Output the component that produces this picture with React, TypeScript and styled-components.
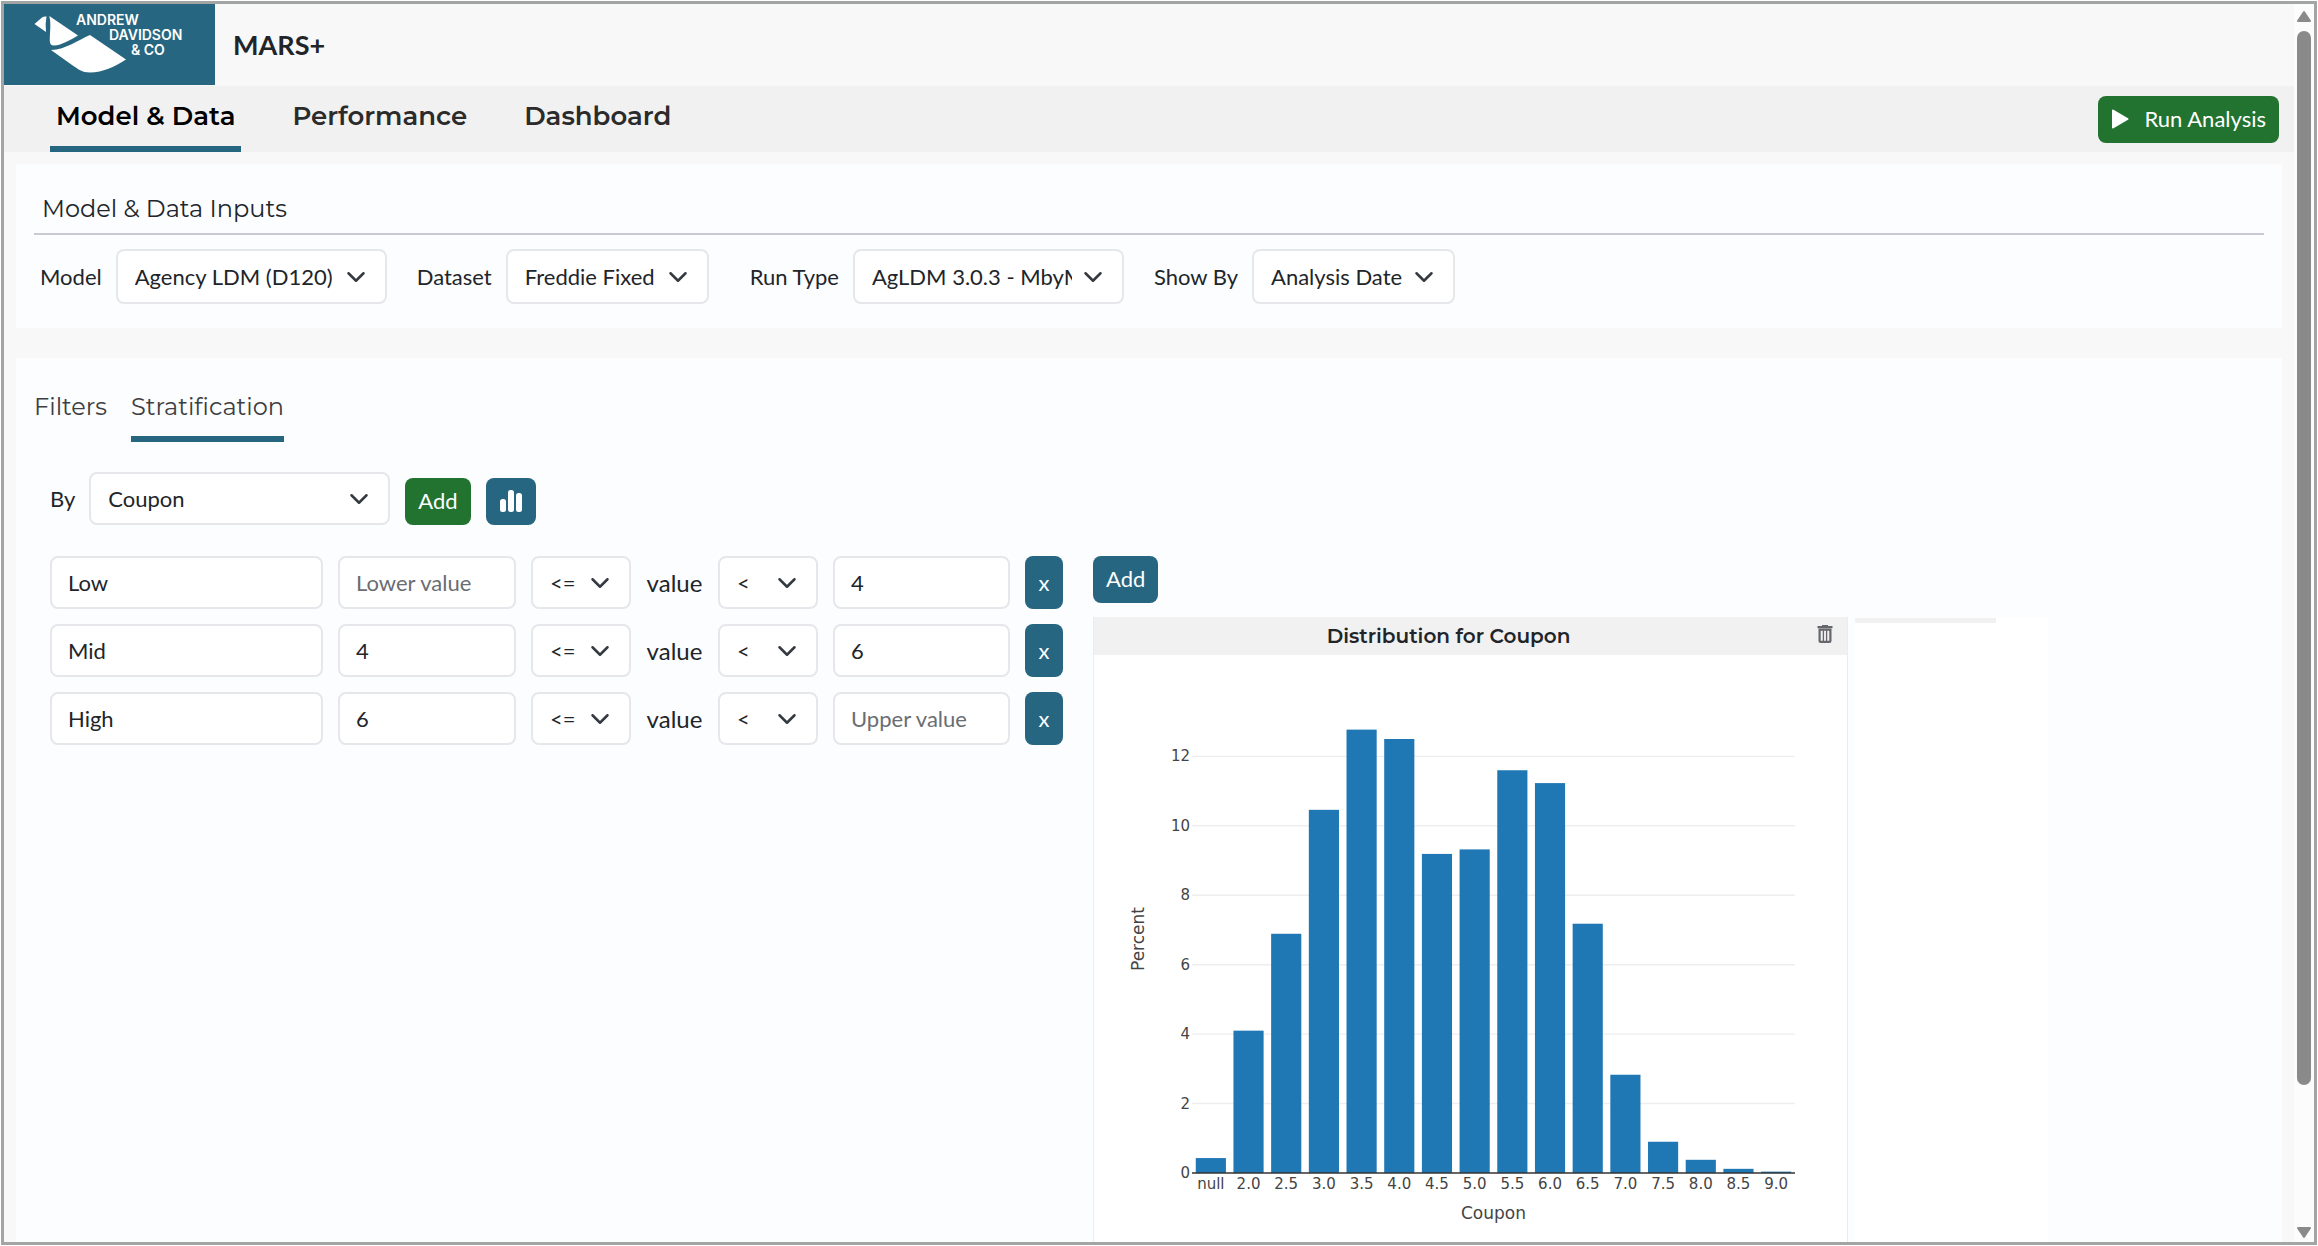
import React from "react";
import styled, { createGlobalStyle } from "styled-components";

const TEAL = "#266680";
const GREEN = "#22732f";
const BODY_FONT = `Lato, "Liberation Sans", sans-serif`;
const HEAD_FONT = `Montserrat, Inter, sans-serif`;
const PLOT_FONT = `"DejaVu Sans", Verdana, sans-serif`;

const GlobalStyle = createGlobalStyle`
  *, *::before, *::after { box-sizing: border-box; }
  body {
    margin: 0;
    background: #fff;
    color: #212529;
    font-family: ${BODY_FONT};
    font-size: 22px;
    line-height: 32px;
  }
  button, input, select { font: inherit; color: inherit; margin: 0; }
`;

const Frame = styled.div`
  display: flex;
  min-height: calc(100vh - 2px);
  margin: 1px;
  border: 3px solid #a3a5a4;
`;

const Page = styled.div`
  flex: 1;
  min-width: 0;
  display: flex;
  flex-direction: column;
  background: #f8f8f8;
`;

const Header = styled.header`
  display: flex;
  align-items: flex-start;
  height: 82px;
`;

const LogoBox = styled.a`
  display: block;
  width: 211px;
  height: 81px;
  background: ${TEAL};
`;

const LogoText = styled.text`
  font-family: Inter, sans-serif;
  font-size: 14px;
  font-weight: 600;
  fill: #fff;
`;

const AppName = styled.h1`
  margin: 0 0 0 18px;
  font-size: 27px;
  font-weight: 700;
  line-height: 82px;
`;

const NavBar = styled.nav`
  display: flex;
  justify-content: space-between;
  align-items: stretch;
  height: 66px;
  padding: 0 15px 0 46px;
  background: #f1f1f1;
`;

const NavTabs = styled.div`
  display: flex;
  gap: 45px;
`;

const NavTab = styled.a<{ $active?: boolean }>`
  display: flex;
  align-items: center;
  padding: 0 6px;
  border-bottom: 6px solid ${(p) => (p.$active ? TEAL : "transparent")};
  color: ${(p) => (p.$active ? "#000" : "#2b2b2b")};
  font-family: ${HEAD_FONT};
  font-size: 26px;
  font-weight: 600;
  text-decoration: none;
`;

const Button = styled.button<{ $tone: "green" | "teal"; $narrow?: boolean }>`
  display: inline-flex;
  align-items: center;
  justify-content: center;
  gap: 16px;
  height: ${(p) => (p.$narrow ? 53 : 47)}px;
  width: ${(p) => (p.$narrow ? "38px" : "auto")};
  padding: ${(p) => (p.$narrow ? "0" : "0 13px 1px")};
  border: 0;
  border-radius: 8px;
  background: ${(p) => (p.$tone === "green" ? GREEN : TEAL)};
  color: #fff;
  white-space: nowrap;
`;

const NavButton = styled(Button)`
  align-self: center;
`;

const Content = styled.main`
  flex: 1;
  display: flex;
  flex-direction: column;
  gap: 30px;
  padding: 12px 12px 0;
`;

const Card = styled.section<{ $grow?: boolean }>`
  display: flex;
  flex-direction: column;
  flex: ${(p) => (p.$grow ? "1" : "none")};
  padding: ${(p) => (p.$grow ? "30px 18px 0" : "26px 18px 24px")};
  background: #fcfdff;
`;

const CardTitle = styled.h2`
  margin: 0 0 14px;
  padding: 0 8px 6px;
  border-bottom: 2px solid #c9cad6;
  font-family: ${HEAD_FONT};
  font-size: 24px;
  font-weight: 400;
  line-height: 37px;
`;

const Fields = styled.div`
  display: flex;
  flex-wrap: wrap;
  gap: 30px;
  padding: 0 6px;
`;

const Field = styled.div<{ $space?: number }>`
  display: flex;
  align-items: center;
  gap: 14px;
  margin-right: ${(p) => p.$space ?? 0}px;
`;

const SelectBox = styled.span<{ $width: number; $tall?: boolean }>`
  display: grid;
  align-items: center;
  width: ${(p) => p.$width}px;
  height: ${(p) => (p.$tall ? 55 : 53)}px;

  & > select,
  & > svg {
    grid-area: 1 / 1;
  }
  & > svg {
    justify-self: end;
    margin-right: 21px;
    pointer-events: none;
  }
`;

const SelectControl = styled.select`
  appearance: none;
  width: 100%;
  height: 100%;
  padding: 0 50px 0 17px;
  border: 2px solid #e5e7eb;
  border-radius: 8px;
  background: #fff;
  overflow: hidden;
`;

const TextInput = styled.input<{ $width: number }>`
  width: ${(p) => p.$width}px;
  height: 53px;
  padding: 0 16px;
  border: 2px solid #e5e7eb;
  border-radius: 8px;
  background: #fff;

  &::placeholder {
    color: #6a6d72;
    opacity: 1;
  }
`;

const SubTabs = styled.div`
  display: flex;
  gap: 24px;
`;

const SubTab = styled.button<{ $active?: boolean }>`
  padding: 0 0 11px;
  border: 0;
  border-bottom: 6px solid ${(p) => (p.$active ? TEAL : "transparent")};
  background: none;
  color: #3c3e42;
  font-family: ${HEAD_FONT};
  font-size: 24px;
  font-weight: 400;
  line-height: 37px;
`;

const ByRow = styled.div`
  display: flex;
  align-items: flex-end;
  gap: 15px;
  margin: 30px 0 31px;
  padding-left: 16px;
`;

const Workspace = styled.div`
  flex: 1;
  display: flex;
  gap: 30px;
  padding-left: 16px;
`;

const Buckets = styled.div`
  display: flex;
  flex-direction: column;
  gap: 15px;
`;

const Bucket = styled.div`
  display: flex;
  align-items: center;
  gap: 15px;
`;

const ValueText = styled.span`
  width: 57px;
  font-size: 24px;
  text-align: center;
`;

const Charts = styled.div`
  flex: 1;
  display: flex;
  flex-direction: column;
  align-items: flex-start;
  gap: 14px;
`;

const Panels = styled.div`
  flex: 1;
  display: flex;
  gap: 7px;
`;

const Panel = styled.article`
  width: 755px;
  border: 1px solid #ececee;
  border-width: 0 1px;
  background: #fff;
`;

const PanelHead = styled.header`
  display: grid;
  grid-template-columns: 1fr 44px;
  align-items: center;
  height: 38px;
  background: #f1f1f1;
`;

const PanelTitle = styled.h3`
  margin: 0;
  font-family: ${HEAD_FONT};
  font-size: 20px;
  font-weight: 600;
  line-height: 36px;
  text-align: center;
`;

const IconButton = styled.button`
  display: grid;
  place-items: center;
  padding: 0 0 4px;
  border: 0;
  background: none;
  color: #65676c;
`;

const EmptyPanel = styled.div`
  width: 193px;
  margin-top: 1px;
  background: linear-gradient(#f1f1f1, #f1f1f1) 0 0 / 141px 5px no-repeat, #fff;
`;

const PlotSvg = styled.svg`
  display: block;
  width: 100%;
  height: auto;
`;

const Tick = styled.text`
  font-family: ${PLOT_FONT};
  font-size: 15px;
  fill: #444;
`;

const AxisTitle = styled.text`
  font-family: ${PLOT_FONT};
  font-size: 17px;
  fill: #444;
  text-anchor: middle;
`;

const ScrollTrack = styled.div`
  display: flex;
  flex-direction: column;
  align-items: center;
  width: 20px;
  padding: 6px 0 3px;
  background: #fcfcfc;
`;

const ScrollThumb = styled.div`
  flex: 1056;
  width: 14px;
  margin-top: 8px;
  border-radius: 7px;
  background: #8a8a8a;
`;

const ScrollGap = styled.div`
  flex: 141;
`;

function Logo() {
  return (
    <svg width="211" height="81" viewBox="4 4 211 81" aria-hidden="true">
      <path fill="#fff" d="M34.5 24 L42 17.5 Q44 16 46.5 16.5 Q45 24 46 32 Z" />
      <path fill="#fff" d="M49.3 16 L78 35.5 C70 40 62 45 54 45.6 Q50 45.8 49.8 41 C49.8 32 51.3 24 49.3 16 Z" />
      <path fill="#fff" d="M51 50 C66 49.5 78 40 90 35 L126 59.5 C114 67 103 72.5 90 72.5 C82 72.5 78 69 72 65 Z" />
      <LogoText x="76" y="25">ANDREW</LogoText>
      <LogoText x="109" y="40">DAVIDSON</LogoText>
      <LogoText x="131" y="55">&amp; CO</LogoText>
    </svg>
  );
}

function Chevron() {
  return (
    <svg width="20" height="20" viewBox="0 0 16 16" fill="none" aria-hidden="true">
      <path d="m2 5 6 6 6-6" stroke="#343a40" strokeWidth="2" strokeLinecap="round" strokeLinejoin="round" />
    </svg>
  );
}

function PlayIcon() {
  return (
    <svg width="18" height="20" viewBox="0 0 18 20" aria-hidden="true">
      <path d="M2 1.5 L16.5 10 L2 18.5 Z" fill="#fff" stroke="#fff" strokeWidth="2" strokeLinejoin="round" />
    </svg>
  );
}

function BarsIcon() {
  return (
    <svg width="24" height="22" viewBox="0 0 24 22" fill="#fff" aria-hidden="true">
      <rect x="1" y="9" width="6" height="13" rx="2.5" />
      <rect x="9" y="0" width="6" height="22" rx="2.5" />
      <rect x="17" y="3" width="6" height="19" rx="2.5" />
    </svg>
  );
}

function TrashIcon() {
  return (
    <svg width="16" height="18" viewBox="0 0 16 18" aria-hidden="true">
      <path fill="currentColor" d="M5 0h6v1h4.5v2.2H.5V1H5z" />
      <path fill="none" stroke="currentColor" strokeWidth="2.2" d="M2.6 4.6h10.8v11.4a.9.9 0 0 1-.9.9H3.5a.9.9 0 0 1-.9-.9z" />
      <path fill="none" stroke="currentColor" strokeWidth="1.3" d="M6.4 5v12M9.6 5v12" />
    </svg>
  );
}

function ScrollArrow({ down }: { down?: boolean }) {
  return (
    <svg width="16" height="13" viewBox="0 0 16 13" aria-hidden="true">
      <path
        d={down ? "M2 2 H14 L8 11 Z" : "M2 11 H14 L8 2 Z"}
        fill="#8a8a8a"
        stroke="#8a8a8a"
        strokeWidth="2"
        strokeLinejoin="round"
      />
    </svg>
  );
}

type DropdownProps = { id?: string; label?: string; value: string; width: number; tall?: boolean };

function Dropdown({ id, label, value, width, tall }: DropdownProps) {
  return (
    <SelectBox $width={width} $tall={tall}>
      <SelectControl id={id} aria-label={label} defaultValue={value}>
        <option>{value}</option>
      </SelectControl>
      <Chevron />
    </SelectBox>
  );
}

const inputs = [
  { id: "model", label: "Model", value: "Agency LDM (D120)", width: 271 },
  { id: "dataset", label: "Dataset", value: "Freddie Fixed", width: 203, space: 11 },
  { id: "run-type", label: "Run Type", value: "AgLDM 3.0.3 - MbyM", width: 271 },
  { id: "show-by", label: "Show By", value: "Analysis Date", width: 203 },
];

const buckets = [
  { name: "Low", lower: "", upper: "4" },
  { name: "Mid", lower: "4", upper: "6" },
  { name: "High", lower: "6", upper: "" },
];

const distribution: [string, number][] = [
  ["null", 0.43], ["2.0", 4.1], ["2.5", 6.89], ["3.0", 10.46],
  ["3.5", 12.77], ["4.0", 12.5], ["4.5", 9.19], ["5.0", 9.32],
  ["5.5", 11.6], ["6.0", 11.23], ["6.5", 7.18], ["7.0", 2.83],
  ["7.5", 0.9], ["8.0", 0.38], ["8.5", 0.12], ["9.0", 0.04],
];

const PLOT = { left: 98, right: 701, base: 518, unit: 34.72 };

function DistributionPlot() {
  const step = (PLOT.right - PLOT.left) / distribution.length;
  const y = (v: number) => PLOT.base - v * PLOT.unit;
  return (
    <PlotSvg viewBox="0 0 753 570" role="img" aria-label="Distribution for Coupon">
      {[2, 4, 6, 8, 10, 12].map((v) => (
        <line key={v} x1={PLOT.left} x2={PLOT.right} y1={y(v)} y2={y(v)} stroke="#eee" strokeWidth="1.4" />
      ))}
      {distribution.map(([name, v], i) => (
        <rect
          key={name}
          x={PLOT.left + step * (i + 0.1)}
          y={y(v)}
          width={step * 0.8}
          height={v * PLOT.unit}
          fill="#1f77b4"
        />
      ))}
      <line x1={PLOT.left} x2={PLOT.right} y1={PLOT.base} y2={PLOT.base} stroke="#333" strokeWidth="1.5" />
      {[0, 2, 4, 6, 8, 10, 12].map((v) => (
        <Tick key={v} x={PLOT.left - 2} y={y(v) + 5} textAnchor="end">{v}</Tick>
      ))}
      {distribution.map(([name], i) => (
        <Tick key={name} x={PLOT.left + step * (i + 0.5)} y={PLOT.base + 16} textAnchor="middle">{name}</Tick>
      ))}
      <AxisTitle x={(PLOT.left + PLOT.right) / 2} y="564">Coupon</AxisTitle>
      <AxisTitle transform="translate(50 284) rotate(-90)">Percent</AxisTitle>
    </PlotSvg>
  );
}

export default function App() {
  return (
    <>
      <GlobalStyle />
      <Frame>
        <Page>
          <Header>
            <LogoBox href="#" aria-label="Andrew Davidson & Co">
              <Logo />
            </LogoBox>
            <AppName>MARS+</AppName>
          </Header>

          <NavBar>
            <NavTabs>
              <NavTab href="#model" $active>Model &amp; Data</NavTab>
              <NavTab href="#performance">Performance</NavTab>
              <NavTab href="#dashboard">Dashboard</NavTab>
            </NavTabs>
            <NavButton type="button" $tone="green">
              <PlayIcon />
              Run Analysis
            </NavButton>
          </NavBar>

          <Content>
            <Card>
              <CardTitle>Model &amp; Data Inputs</CardTitle>
              <Fields>
                {inputs.map((f) => (
                  <Field key={f.id} $space={f.space}>
                    <label htmlFor={f.id}>{f.label}</label>
                    <Dropdown id={f.id} value={f.value} width={f.width} tall />
                  </Field>
                ))}
              </Fields>
            </Card>

            <Card $grow>
              <SubTabs role="tablist">
                <SubTab type="button" role="tab" aria-selected="false">Filters</SubTab>
                <SubTab type="button" role="tab" aria-selected="true" $active>Stratification</SubTab>
              </SubTabs>

              <ByRow>
                <Field>
                  <label htmlFor="strat-by">By</label>
                  <Dropdown id="strat-by" value="Coupon" width={301} />
                </Field>
                <Button type="button" $tone="green">Add</Button>
                <Button type="button" $tone="teal" aria-label="Show distribution">
                  <BarsIcon />
                </Button>
              </ByRow>

              <Workspace>
                <Buckets>
                  {buckets.map((b) => (
                    <Bucket key={b.name}>
                      <TextInput $width={273} defaultValue={b.name} aria-label="Bucket name" />
                      <TextInput $width={178} defaultValue={b.lower} placeholder="Lower value" aria-label="Lower value" />
                      <Dropdown value="<=" width={100} label="Lower comparison" />
                      <ValueText>value</ValueText>
                      <Dropdown value="<" width={100} label="Upper comparison" />
                      <TextInput $width={177} defaultValue={b.upper} placeholder="Upper value" aria-label="Upper value" />
                      <Button type="button" $tone="teal" $narrow>x</Button>
                    </Bucket>
                  ))}
                </Buckets>

                <Charts>
                  <Button type="button" $tone="teal">Add</Button>
                  <Panels>
                    <Panel>
                      <PanelHead>
                        <PanelTitle>Distribution for Coupon</PanelTitle>
                        <IconButton type="button" aria-label="Remove chart">
                          <TrashIcon />
                        </IconButton>
                      </PanelHead>
                      <DistributionPlot />
                    </Panel>
                    <EmptyPanel />
                  </Panels>
                </Charts>
              </Workspace>
            </Card>
          </Content>
        </Page>

        <ScrollTrack aria-hidden="true">
          <ScrollArrow />
          <ScrollThumb />
          <ScrollGap />
          <ScrollArrow down />
        </ScrollTrack>
      </Frame>
    </>
  );
}
